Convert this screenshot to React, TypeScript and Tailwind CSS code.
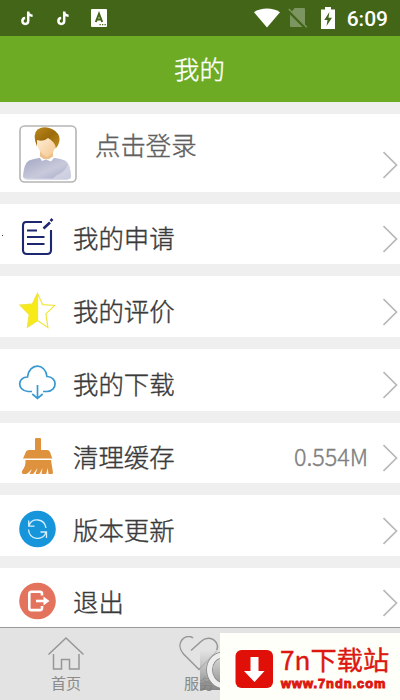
import type { ReactNode } from 'react'

const TikTokIcon = () => (
  <svg viewBox="0 0 12 15" className="h-[15px] w-3" fill="none" stroke="white" strokeWidth="2.5">
    <path d="M7.2 .5V10a2.9 2.9 0 1 1-3-2.9M7.2 1c.2 2.3 1.8 3.6 4.4 3.7" />
  </svg>
)

const StatusBar = () => (
  <div className="flex h-9 items-center bg-[#426518] pl-[21px] pr-3">
    <TikTokIcon />
    <div className="w-6" />
    <TikTokIcon />
    <svg viewBox="0 0 16 18" className="ml-[22px] h-[18px] w-4">
      <rect width="16" height="18" rx="1" fill="white" />
      <path d="M4.8 13 8 4.8 11.2 13M6 10.5h4" fill="none" stroke="#426518" strokeWidth="2" />
      <path d="M8.5 15.6h1.3M11 15.6h1.3M13.5 15.6h1.3" stroke="#426518" strokeWidth="1.3" />
    </svg>
    <div className="flex-1" />
    <svg viewBox="0 0 26 21" className="mr-px h-[21px] w-[26px]" fill="white">
      <path d="M0 4.200C7-.8 19-.8 26 4.200L13 19.500Z" />
    </svg>
    <svg viewBox="0 0 20 21" className="ml-[7px] mr-px h-[21px] w-5">
      <path d="M6.500 0H16q1 0 1 1v16.500L3.500 4ZM2 6.500 14.500 19H3q-1 0-1-1Z" fill="#7d9560" />
      <path d="M.8 1 18.800 19.300" stroke="#7d9560" strokeWidth="1.5" />
    </svg>
    <svg viewBox="0 0 14 22" className="mb-px ml-[12px] h-[22px] w-3.5">
      <path d="M0 2.5h4V0h6v2.5h4V22H0Z" fill="white" />
      <path d="M8.4 5 3.3 13h3.2l-1 6L11 10.8H7.5Z" fill="#426518" />
    </svg>
    <span className="ml-3 pt-[2px] font-['Roboto','Noto_Sans',sans-serif] text-[21px] font-medium leading-none text-white">6:09</span>
  </div>
)

const Chevron = () => (
  <svg viewBox="0 0 16 28" className="h-7 w-4" fill="none" stroke="#b8b8b8" strokeWidth="1.7">
    <path d="M.5 1 13.500 14 .5 27" />
  </svg>
)

const Avatar = () => (
  <svg viewBox="0 0 58 58" className="h-[58px] w-[58px]">
    <defs>
      <linearGradient id="hair" x1="0" y1="0" x2="1" y2="1">
        <stop stopColor="#bd8a1e" />
        <stop offset=".5" stopColor="#9b6b0b" />
        <stop offset="1" stopColor="#c18c1e" />
      </linearGradient>
      <linearGradient id="face" x1="0" y1="0" x2="1" y2="1">
        <stop stopColor="#fff0da" />
        <stop offset="1" stopColor="#f5c58c" />
      </linearGradient>
      <linearGradient id="shirt" x1="0" y1="0" x2="1" y2="1">
        <stop stopColor="#a2a6c2" />
        <stop offset=".55" stopColor="#c8cadb" />
        <stop offset="1" stopColor="#a5a9c6" />
      </linearGradient>
    </defs>
    <rect x="1" y="1" width="56" height="56" rx="4.5" fill="white" stroke="#b5b5b5" strokeWidth="1.6" />
    <path d="M4 51Q5 38 10 35.500q5-2 10-2.500h16q6 .5 10 2.500Q51 38 52 51q0 3-4 3.500H8Q4 54 4 51Z" fill="url(#shirt)" />
    <path d="M38 50q10-4 11-12 2.500 5 3 13 0 3-4 3.500H8q-4-.5-4-3 2 2 6 2h24Z" fill="#dcdde9" opacity=".7" />
    <path d="m20 31.500 3 4.500 4-1.500 5 2 3.500-4.500-1-1H21Z" fill="#fff" />
    <path d="M21 26v5.500q6 5.500 13 0V26Z" fill="#edc18e" />
    <path d="M18 15q8-1 11-4 6 1 8 8-1 9-9 13-7-3-10-12Z" fill="url(#face)" />
    <path d="M18 21.500Q13 9 18.500 4.500 25 .5 33 4q8 4 7.500 11-.5 5-4 8.500.5-6-7.500-10.500-4 4-11 2Z" fill="url(#hair)" />
  </svg>
)

const ApplyIcon = () => (
  <svg viewBox="0 0 38 38" className="h-[38px] w-[38px]" fill="none" stroke="#1c2770" strokeWidth="2.1">
    <path d="M24 4H8Q5 4 5 8v24q0 4 4 4h20q4 0 4-4V12" />
    <path d="M9 12.500h10M9 19h17.500M9 26h17.500" />
    <path d="m25.500 10.500 6.500-6M32.500 3l2-2" strokeWidth="2.500" />
  </svg>
)

const StarIcon = () => (
  <svg viewBox="0 0 38 38" className="h-[38px] w-[38px]" stroke="#f0e63f" strokeWidth="1.2">
    <path d="m19.500 2.500 5.200 11.200 12 .8-8.800 8.400 2 13.600-10.400-7L9.500 36l2-12.500-9.200-9.200L14.500 13Z" fill="white" />
    <path d="M19.500 3 14.500 13 2.300 14.300l9.200 9.200L9.500 36l10-6.500Z" fill="#f8ea16" />
  </svg>
)

const CloudIcon = () => (
  <svg viewBox="0 0 38 38" className="h-[38px] w-[38px]" fill="none" stroke="#3699d2" strokeWidth="1.7">
    <path d="M14 27.500H10C-1.500 26 -.5 13 9.500 13 11-1.300 27.500-1.300 29 12.500 39.500 13 40 26.500 29 27.500H25" />
    <path d="M19.500 21v13.500M14.300 30l5.200 4.300 5.200-4.300" />
  </svg>
)

const BroomIcon = () => (
  <svg viewBox="0 0 38 38" className="h-[38px] w-[38px]" fill="#df923e">
    <path d="M17 13V2q0-1 1-1h4q1 0 1 1v11h6q3 0 4 5l1.300 3.500H5L7 17q1-4 4-4Z" />
    <path d="M7.500 23H33l2 12.500q0 1.500-1.500 1.500h-3l-.8-6-1.200 5q0 1-1.500 1h-3.500l1-6-2.500 5q-.5 1-1.500 1H17.500l2-6-3.500 5q-.5 1-1.500 1h-3l2.500-5-4 4q-1 1-2 1H5q-2-1-1-3 4-5 3.500-11Z" />
  </svg>
)

const UpdateIcon = () => (
  <svg viewBox="0 0 38 38" className="h-[38px] w-[38px]" fill="none" stroke="#d7f0ff" strokeWidth="1.3">
    <circle cx="19.5" cy="19" r="18.3" fill="#1795db" stroke="none" />
    <path d="M11 15.500C14 7.500 26.500 8 28 18M10.700 10.500v5.700h5.800M10.500 19.500c1 11 14.500 11.500 17.500 3M28.500 28v-6H22.500" />
  </svg>
)

const ExitIcon = () => (
  <svg viewBox="0 0 38 38" className="h-[38px] w-[38px]" fill="none" stroke="white" strokeWidth="2.6">
    <circle cx="19.5" cy="19" r="18.3" fill="#e3735c" stroke="none" />
    <path d="M24 13.500v-2q0-1.800-2-1.800H13.500q-2.200 0-2.200 2.200v14q0 2.200 2.200 2.200H22q2 0 2-1.800v-2.200" />
    <path d="M18 19h8.500" />
    <path d="m25.500 14.500 6 4.500-6 4.500Z" fill="white" stroke="none" />
  </svg>
)

type Item = { label: string; icon: ReactNode; size: string; value?: string }

const items: Item[] = [
  { label: '我的申请', icon: <ApplyIcon />, size: 'h-[60px] pt-2' },
  { label: '我的评价', icon: <StarIcon />, size: 'h-[61px] pt-2' },
  { label: '我的下载', icon: <CloudIcon />, size: 'h-[62px] pt-[7px]' },
  { label: '清理缓存', icon: <BroomIcon />, size: 'h-[60px] pt-2', value: '0.554M' },
  { label: '版本更新', icon: <UpdateIcon />, size: 'h-[61px] pt-[9px]' },
  { label: '退出', icon: <ExitIcon />, size: 'h-[59px] pt-[9px]' },
]

const MenuRow = ({ label, icon, size, value }: Item) => (
  <div className={`flex items-center bg-white pl-[18px] pr-[1px] ${size}`}>
    <div className="pb-[2px]">{icon}</div>
    <span className="ml-[17px] flex-1 pb-[2px] text-[25.4px] leading-9 text-[#3a3a3a]">{label}</span>
    {value && <span className="mr-[15px] pb-[3px] text-[23.3px] leading-9 text-[#808080]">{value}</span>}
    <div className="pt-[2px]"><Chevron /></div>
  </div>
)

const TabBar = () => (
  <div className="flex h-[73px] border-t border-[#999] bg-[#e3e3e3] text-[15px] leading-5 text-[#8c8c8c] [-webkit-text-stroke:0.1px]">
    <div className="flex w-[132px] flex-col items-center pt-2">
      <svg viewBox="0 0 38 36" className="h-9 w-[38px]" fill="none" stroke="#969696" strokeWidth="1.5">
        <path d="M1.500 18.500 19 2l17.500 16.500M6.500 18v15h8V23.500h8V33H32V18" />
      </svg>
      <span className="mt-px">首页</span>
    </div>
    <div className="flex w-[134px] flex-col items-center pt-2">
      <svg viewBox="0 0 40 36" className="h-9 w-10" fill="none" stroke="#969696" strokeWidth="1.5">
        <path d="m12 14.500 10-9C31-3 44 7 36 17L20 33.500 4.500 18C-5 7 7-3.500 14 2" />
      </svg>
      <span className="mt-px">服务</span>
    </div>
  </div>
)

const Watermark = () => (
  <>
    <svg viewBox="0 0 20 40" className="absolute left-[200px] top-[650px] h-10 w-5">
      <defs>
        <linearGradient id="shade" x1="0" y1="0" x2="0" y2="1">
          <stop stopColor="#e3e3e3" stopOpacity=".7" />
          <stop offset="1" stopColor="#777" stopOpacity=".85" />
        </linearGradient>
      </defs>
      <rect width="20" height="40" fill="url(#shade)" />
      <path d="M23 5C5 6 5 33 23 36" fill="none" stroke="#858585" strokeWidth="6.5" />
      <path d="M23 5C5 6 5 33 23 36" fill="none" stroke="#eee" strokeWidth="5" />
    </svg>
    <div className="absolute left-[220px] top-[633px] flex h-[67px] w-[180px] items-center bg-[#fffffa] pl-[15px] pt-1">
      <svg viewBox="0 0 38 38" className="h-[38px] w-[38px]">
        <rect x=".5" width="37.5" height="38" rx="6" fill="#e01008" />
        <path d="M15.500 7h8v14h6L19.500 32 9 21h6.500Z" fill="white" />
      </svg>
      <div className="ml-[7px] flex flex-col text-[#dc170f]">
        <span className="whitespace-nowrap text-[26.2px] font-normal leading-[29px] [-webkit-text-stroke:0.4px_#dc170f]">7n下载站</span>
        <span className="pl-px pt-px font-['Liberation_Sans',Arial,sans-serif] text-[12.8px] font-bold leading-[17px] tracking-[1px] [-webkit-text-stroke:1px_#dc170f]">www.7ndn.com</span>
      </div>
    </div>
  </>
)

export default function App() {
  return (
    <div className="relative h-[700px] w-[400px] overflow-hidden bg-[#efefef] font-['Noto_Sans_CJK_SC',sans-serif]">
      <StatusBar />
      <header className="flex h-[66px] items-center justify-center bg-[#6dab25] pr-px text-[25.4px] font-light leading-none text-white [-webkit-text-stroke:0.4px]">我的</header>
      <main className="flex flex-col gap-3 pt-3 font-light [-webkit-text-stroke:0.4px]">
        <div className="flex h-[78px] items-start bg-white pl-[19px] pr-[1px] pt-[11px]">
          <Avatar />
          <span className="ml-[18px] mt-px flex-1 text-[25.4px] leading-9 text-[#606060]">点击登录</span>
          <div className="pt-[26px]"><Chevron /></div>
        </div>
        {items.map((item) => (
          <MenuRow key={item.label} {...item} />
        ))}
      </main>
      <TabBar />
      <Watermark />
      <span className="absolute left-[2px] top-[235px] h-px w-px bg-[#333]" />
    </div>
  )
}
